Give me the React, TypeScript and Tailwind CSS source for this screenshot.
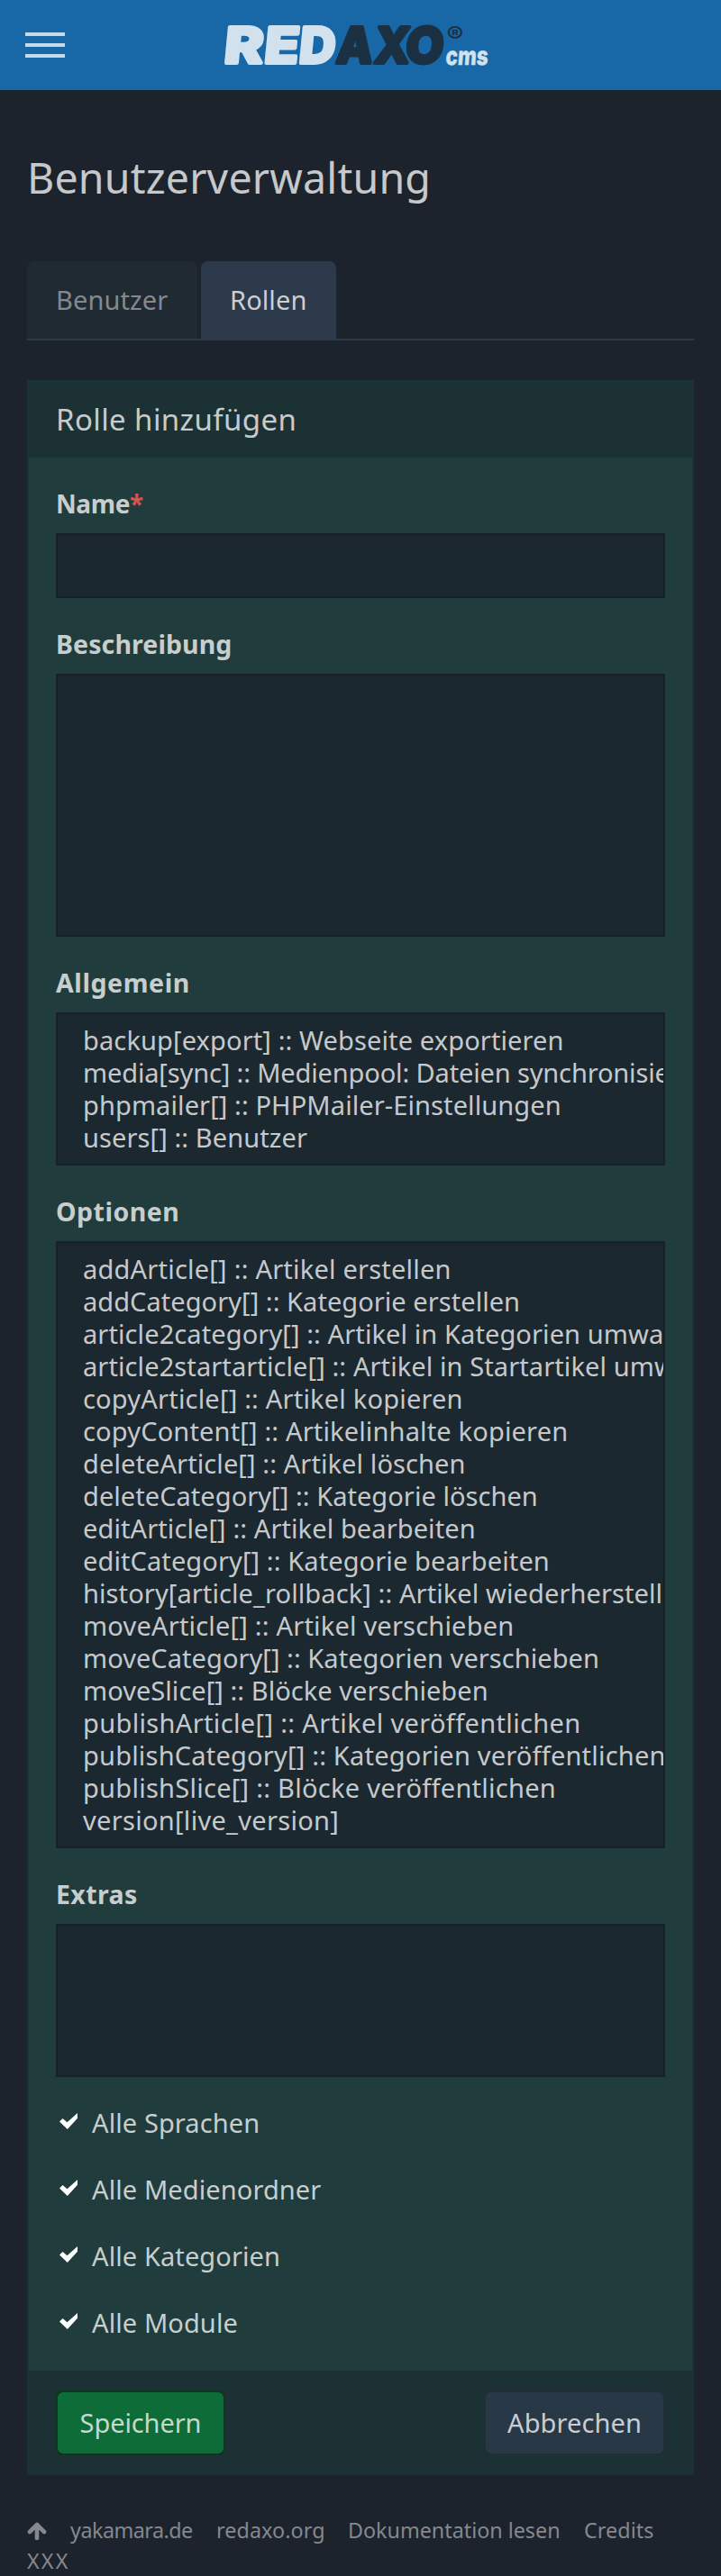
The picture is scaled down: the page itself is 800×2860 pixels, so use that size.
import React from "react";

type Item = { text: string; tracking?: string };

const general: Item[] = [
  { text: "backup[export] :: Webseite exportieren", tracking: "tracking-[0.12px]" },
  { text: "media[sync] :: Medienpool: Dateien synchronisieren", tracking: "tracking-[-0.14px]" },
  { text: "phpmailer[] :: PHPMailer-Einstellungen" },
  { text: "users[] :: Benutzer" },
];

const options: Item[] = [
  { text: "addArticle[] :: Artikel erstellen", tracking: "tracking-[0.22px]" },
  { text: "addCategory[] :: Kategorie erstellen", tracking: "tracking-[0.05px]" },
  { text: "article2category[] :: Artikel in Kategorien umwandeln" },
  { text: "article2startarticle[] :: Artikel in Startartikel umwandeln" },
  { text: "copyArticle[] :: Artikel kopieren", tracking: "tracking-[0.2px]" },
  { text: "copyContent[] :: Artikelinhalte kopieren", tracking: "tracking-[0.16px]" },
  { text: "deleteArticle[] :: Artikel löschen" },
  { text: "deleteCategory[] :: Kategorie löschen", tracking: "tracking-[0.05px]" },
  { text: "editArticle[] :: Artikel bearbeiten" },
  { text: "editCategory[] :: Kategorie bearbeiten" },
  { text: "history[article_rollback] :: Artikel wiederherstellen", tracking: "tracking-[0.1px]" },
  { text: "moveArticle[] :: Artikel verschieben", tracking: "tracking-[0.2px]" },
  { text: "moveCategory[] :: Kategorien verschieben", tracking: "tracking-[0.05px]" },
  { text: "moveSlice[] :: Blöcke verschieben", tracking: "tracking-[0.05px]" },
  { text: "publishArticle[] :: Artikel veröffentlichen", tracking: "tracking-[0.35px]" },
  { text: "publishCategory[] :: Kategorien veröffentlichen", tracking: "tracking-[0.2px]" },
  { text: "publishSlice[] :: Blöcke veröffentlichen", tracking: "tracking-[0.27px]" },
  { text: "version[live_version]", tracking: "tracking-[0.3px]" },
];

const checks = ["Alle Sprachen", "Alle Medienordner", "Alle Kategorien", "Alle Module"];

const logoLetters = [
  { ch: "R", x: -1.5, w: 43, fill: "#d1e1ed" },
  { ch: "E", x: 43, w: 38, fill: "#d1e1ed" },
  { ch: "D", x: 81.5, w: 40, fill: "#d1e1ed" },
  { ch: "A", x: 123, w: 40, fill: "#1b3042" },
  { ch: "X", x: 165, w: 39, fill: "#1b3042" },
  { ch: "O", x: 199.5, w: 42, fill: "#1b3042" },
];

function Logo() {
  return (
    <svg width="296" height="48" viewBox="0 0 296 48" className="overflow-visible" fontFamily="Inter, sans-serif" fontWeight="800">
      <g transform="translate(0 46) skewX(-5.5)" strokeWidth="4" strokeLinejoin="round" fontSize="55">
        {logoLetters.map((l) => (
          <text key={l.ch} x={l.x} y="-2" textLength={l.w} lengthAdjust="spacingAndGlyphs" fill={l.fill} stroke={l.fill}>
            {l.ch}
          </text>
        ))}
      </g>
      <text x="246.5" y="21" fontSize="24" fill="#1b3042" textLength="19" lengthAdjust="spacingAndGlyphs">®</text>
      <g transform="translate(245 46) skewX(-4)">
        <text x="0" y="-0.5" fontSize="28" fill="#d1e1ed" stroke="#d1e1ed" strokeWidth="0.6" textLength="47" lengthAdjust="spacingAndGlyphs">cms</text>
      </g>
    </svg>
  );
}

function Label({ children, className }: { children: React.ReactNode; className: string }) {
  return <div className={`h-9 font-bold text-[#c7cecd] ${className}`}>{children}</div>;
}

const field = "mt-4 mb-8 w-full overflow-hidden border-2 border-[#18202a] bg-[#1c2830] shadow-[inset_0_2px_2px_rgba(0,0,0,0.075)]";

function SelectBox({ items, className }: { items: Item[]; className: string }) {
  return (
    <div className={`${field} px-7 pt-[11px] ${className}`}>
      {items.map((item) => (
        <div key={item.text} className={`h-9 whitespace-nowrap leading-9 text-[#c6c9cb] ${item.tracking ?? ""}`}>{item.text}</div>
      ))}
    </div>
  );
}

export default function App() {
  return (
    <div className="h-[2860px] w-[800px] overflow-hidden bg-[#1c232d] font-['Noto_Sans',sans-serif] text-[29px] tracking-[0.1px]">
      <header className="flex h-[100px] items-center bg-[#1868a8] pl-7">
        <div className="flex w-11 flex-col gap-2">
          <span className="h-1 bg-[#c5d9e9]" />
          <span className="h-1 bg-[#c5d9e9]" />
          <span className="h-1 bg-[#c5d9e9]" />
        </div>
        <div className="ml-[177px]"><Logo /></div>
      </header>

      <main className="px-[30px]">
        <h1 className="pt-[67px] text-[46.5px] leading-[60px] tracking-[0.2px] text-[#c6c8ca]">Benutzerverwaltung</h1>

        <nav className="mt-[63px] flex gap-1 border-b-2 border-[#2d3a4a]">
          <div className="h-[86px] w-[189px] rounded-t-lg bg-[#202a33] pl-8 leading-[86px] text-[#85898d]">Benutzer</div>
          <div className="h-[86px] w-[150px] rounded-t-lg bg-[#2d3a4b] pl-8 leading-[86px] text-[#cbced2]">Rollen</div>
        </nav>

        <section className="mt-11 bg-[#1c3133]">
          <h2 className="h-[86px] pl-8 text-[33px] leading-[88px] tracking-[0.4px] text-[#c6cccc]">Rolle hinzufügen</h2>

          <div className="mx-0.5 h-[2124px] bg-[#203c3c] px-[30px] pt-8">
            <Label className="text-[28px] leading-[38px] tracking-[-0.4px]">Name<span className="text-[#d9534f]">*</span></Label>
            <div className={`${field} h-[72px]`} />
            <Label className="text-[28.5px] leading-[38px] tracking-[0.1px]">Beschreibung</Label>
            <div className={`${field} h-[292px]`} />
            <Label className="text-[28.5px] leading-[38px] tracking-[0.6px]">Allgemein</Label>
            <SelectBox items={general} className="h-[170px]" />
            <Label className="text-[28.5px] leading-[38px] tracking-[0.5px]">Optionen</Label>
            <SelectBox items={options} className="h-[674px]" />
            <Label className="text-[28.5px] leading-[38px] tracking-[0.4px]">Extras</Label>
            <div className={`${field} h-[170px]`} />

            <div className="flex flex-col gap-[38px]">
              {checks.map((t) => (
                <div key={t} className="flex h-9 items-start leading-[38px] text-[#c7cecd]">
                  <svg width="20" height="18" viewBox="0 0 20 18" className="mt-2 mr-4 ml-1">
                    <path d="M0 9.5 3.6 6 8.5 10.2 20 0V5.8L8.8 18Z" fill="#fff" />
                  </svg>
                  {t}
                </div>
              ))}
            </div>
          </div>

          <div className="flex h-[116px] items-center justify-between px-8">
            <button className="h-[72px] w-[188px] rounded-lg border-2 border-[#0b3620] bg-[#0e6c38] text-center tracking-[-0.1px] text-[#c3dacd]">Speichern</button>
            <button className="h-[72px] w-[201px] rounded-lg border-2 border-[#222d39] bg-[#293847] text-center text-[#c9cdd1]">Abbrechen</button>
          </div>
        </section>

        <footer className="pt-11 text-[23.3px] leading-[34px] text-[#85888c]">
          <div className="flex h-[34px] items-start">
            <svg width="22" height="20" viewBox="0 0 22 20" className="mt-2 mr-[26px] shrink-0">
              <path d="M3 11 11 3 19 11M11 4V18" fill="none" stroke="#85888c" strokeWidth="4.6" strokeLinecap="round" strokeLinejoin="round" />
            </svg>
            <div className="w-[162px] tracking-[-0.5px]">yakamara.de</div>
            <div className="w-[146px]">redaxo.org</div>
            <div className="w-[262px] tracking-[0px]">Dokumentation lesen</div>
            <div>Credits</div>
          </div>
          <div className="tracking-[2.2px]">XXX</div>
        </footer>
      </main>
    </div>
  );
}
